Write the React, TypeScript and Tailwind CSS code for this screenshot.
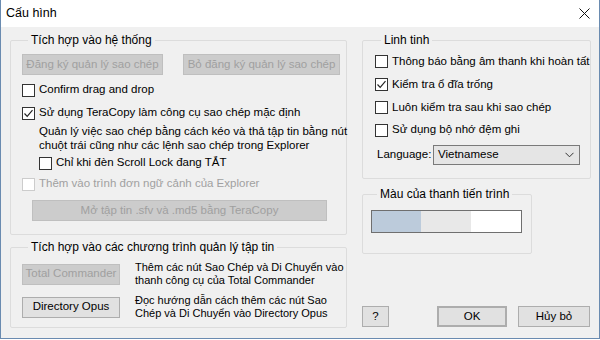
import React from 'react';

const font = { fontFamily: '"Liberation Sans", Arial, sans-serif' };

// Win10-style checkbox
const Check: React.FC<{ checked?: boolean; disabled?: boolean; label: string }> = ({ checked, disabled, label }) => (
  <div className={`flex items-center gap-[4px] ${disabled ? 'text-[#a0a0a0]' : 'text-black'}`}>
    <span
      className={`flex h-[13px] w-[13px] shrink-0 items-center justify-center border bg-white ${
        disabled ? 'border-[#cccccc]' : 'border-[#333333]'
      }`}
    >
      {checked && (
        <svg width="11" height="11" viewBox="0 0 11 11" fill="none">
          <path d="M1.5 5.5 L4.2 8.3 L9.5 2.2" stroke="#222" strokeWidth="1.2" />
        </svg>
      )}
    </span>
    <span>{label}</span>
  </div>
);

const Btn: React.FC<{ children: React.ReactNode; disabled?: boolean; className?: string }> = ({
  children,
  disabled,
  className = '',
}) => (
  <div
    className={`flex shrink-0 items-center justify-center border ${
      disabled ? 'border-[#bfbfbf] bg-[#cccccc] text-[#a0a0a0]' : 'border-[#adadad] bg-[#e1e1e1] text-black'
    } ${className}`}
  >
    {children}
  </div>
);

const Group: React.FC<{ title: string; className?: string; children: React.ReactNode }> = ({
  title,
  className = '',
  children,
}) => (
  <fieldset className={`min-w-0 rounded-[2px] border border-[#dcdcdc] ${className}`}>
    <legend className="ml-[6px] h-4 px-[3px] text-[12px] leading-4">{title}</legend>
    {children}
  </fieldset>
);

export default function App() {
  return (
    <div className="h-[340px] w-[600px] overflow-hidden whitespace-nowrap bg-white text-[11.5px] text-black" style={font}>
      <div className="flex h-[339px] flex-col border border-t-0 border-[#6a8bb0]">
        {/* title bar */}
        <div className="flex h-[27px] shrink-0 items-center justify-between bg-white pl-[5px] pr-[9px]">
          <span className="text-[12.5px]">Cấu hình</span>
          <svg width="11" height="11" viewBox="0 0 11 11">
            <path d="M0.5 0.5 L10.5 10.5 M10.5 0.5 L0.5 10.5" stroke="#111" strokeWidth="1" />
          </svg>
        </div>

        <div className="flex flex-1 gap-[15px] bg-[#f0f0f0] pl-[9px] pt-[5px]">
          {/* left column */}
          <div className="flex w-[337px] flex-col">
            <Group title="Tích hợp vào hệ thống" className="h-[203px] px-[11px]">
              <div className="mt-[6px] flex gap-[20px]">
                <Btn disabled className="h-[21px] w-[141px]">Đăng ký quản lý sao chép</Btn>
                <Btn disabled className="h-[21px] w-[157px]">Bỏ đăng ký quản lý sao chép</Btn>
              </div>
              <div className="mt-[4px] flex h-[22px] items-center">
                <Check label="Confirm drag and drop" />
              </div>
              <div className="mt-[1px] flex h-[22px] items-center">
                <Check checked label="Sử dụng TeraCopy làm công cụ sao chép mặc định" />
              </div>
              <div className="pl-[17px] leading-[14px]">
                <p>Quản lý việc sao chép bằng cách kéo và thả tập tin bằng nút</p>
                <p>chuột trái cũng như các lệnh sao chép trong Explorer</p>
              </div>
              <div className="flex h-[22px] items-center pl-[17px]">
                <Check label="Chỉ khi đèn Scroll Lock đang TẮT" />
              </div>
              <div className="flex h-[20px] items-center">
                <Check disabled label="Thêm vào trình đơn ngữ cảnh của Explorer" />
              </div>
              <Btn disabled className="ml-[10px] mt-[6px] h-[21px] w-[295px]">
                Mở tập tin .sfv và .md5 bằng TeraCopy
              </Btn>
            </Group>

            <Group title="Tích hợp vào các chương trình quản lý tập tin" className="mt-[4px] h-[89px] px-[11px]">
              <div className="mt-[6px] flex items-center gap-[15px]">
                <Btn disabled className="h-[21px] w-[98px]">Total Commander</Btn>
                <div className="text-[11px] leading-[13px]">
                  <p>Thêm các nút Sao Chép và Di Chuyển vào</p>
                  <p>thanh công cụ của Total Commander</p>
                </div>
              </div>
              <div className="mt-[7px] flex items-center gap-[15px]">
                <Btn className="h-[21px] w-[98px]">Directory Opus</Btn>
                <div className="text-[11px] leading-[13px]">
                  <p>Đọc hướng dẫn cách thêm các nút Sao</p>
                  <p>Chép và Di Chuyển vào Directory Opus</p>
                </div>
              </div>
            </Group>
          </div>

          {/* right column */}
          <div className="flex w-[229px] flex-col">
            <Group title="Linh tinh" className="h-[147px] px-[12px]">
              <div className="mt-[2px] flex flex-col">
                <div className="flex h-[23px] items-center">
                  <Check label="Thông báo bằng âm thanh khi hoàn tất" />
                </div>
                <div className="flex h-[23px] items-center">
                  <Check checked label="Kiểm tra ổ đĩa trống" />
                </div>
                <div className="flex h-[23px] items-center">
                  <Check label="Luôn kiểm tra sau khi sao chép" />
                </div>
                <div className="flex h-[22px] items-center">
                  <Check label="Sử dụng bộ nhớ đệm ghi" />
                </div>
              </div>
              <div className="mt-[4px] flex items-center">
                <span className="w-[58px] shrink-0 pl-[2px]">Language:</span>
                <div className="flex h-[20px] w-[147px] shrink-0 items-center justify-between border border-[#7a7a7a] bg-[#e5e5e5] pl-[4px] pr-[5px]">
                  <span>Vietnamese</span>
                  <svg width="9" height="6" viewBox="0 0 9 6">
                    <path d="M0.5 0.8 L4.5 4.8 L8.5 0.8" stroke="#333" strokeWidth="1" fill="none" />
                  </svg>
                </div>
              </div>
            </Group>

            <Group title="Màu của thanh tiến trình" className="mt-[7px] h-[68px] w-[170px] px-[8px]">
              <div className="mt-[8px] flex h-[23px] w-[151px] border border-[#6f6f6f]">
                <div className="w-[49px] bg-[#bccbdb]" />
                <div className="w-[50px] bg-[#e8e8e8]" />
                <div className="flex-1 bg-white" />
              </div>
            </Group>

            <div className="mb-[11px] mt-auto flex items-center">
              <Btn className="h-[21px] w-[27px]">?</Btn>
              <Btn className="ml-[48px] h-[21px] w-[70px] border-2 border-[#0078d7]">OK</Btn>
              <Btn className="ml-[11px] h-[21px] w-[72px]">Hủy bỏ</Btn>
            </div>
          </div>
        </div>
      </div>
    </div>
  );
}
